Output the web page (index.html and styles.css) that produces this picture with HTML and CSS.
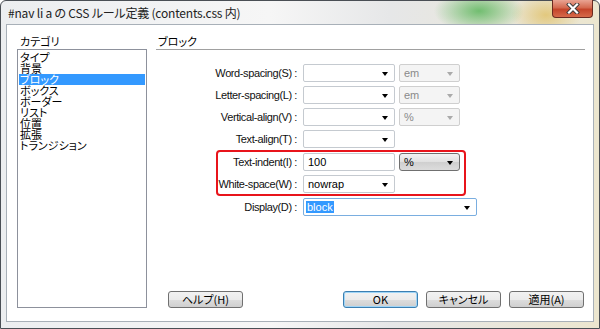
FILE: index.html
```html
<!DOCTYPE html>
<html lang="ja">
<head>
<meta charset="utf-8">
<title>CSS ルール定義</title>
<link rel="stylesheet" href="styles.css">
</head>
<body>
<div class="window">
  <div class="titlebar">
    <span class="title">#nav li a の CSS ルール定義 (contents.css 内)</span>
    <div class="close"><svg width="14" height="11" viewBox="0 0 14 11"><path d="M3 1.5 L11 9.5 M11 1.5 L3 9.5" stroke="#3a3a3a" stroke-width="4" stroke-linecap="square"/><path d="M3 1.5 L11 9.5 M11 1.5 L3 9.5" stroke="#fff" stroke-width="2.2" stroke-linecap="square"/></svg></div>
  </div>
  <div class="client">
    <div class="main">
      <div class="catcol">
        <div class="heading">カテゴリ</div>
        <ul class="listbox">
          <li>タイプ</li>
          <li>背景</li>
          <li class="sel">ブロック</li>
          <li>ボックス</li>
          <li>ボーダー</li>
          <li>リスト</li>
          <li>位置</li>
          <li>拡張</li>
          <li>トランジション</li>
        </ul>
      </div>
      <div class="panel">
        <div class="heading panelhead">ブロック</div>
        <div class="form">
          <div class="row"><label>Word-spacing(S) :</label><div class="sel-box w92"><span></span><i class="arr"></i></div><div class="sel-box dis w61"><span>em</span><i class="arr"></i></div></div>
          <div class="row"><label>Letter-spacing(L) :</label><div class="sel-box w92"><span></span><i class="arr"></i></div><div class="sel-box dis w61"><span>em</span><i class="arr"></i></div></div>
          <div class="row"><label>Vertical-align(V) :</label><div class="sel-box w92"><span></span><i class="arr"></i></div><div class="sel-box dis w61"><span>%</span><i class="arr"></i></div></div>
          <div class="row"><label>Text-align(T) :</label><div class="sel-box w92"><span></span><i class="arr"></i></div></div>
          <div class="highlight">
            <div class="row"><label>Text-indent(I) :</label><div class="input w92">100</div><div class="sel-box btn w61"><span>%</span><i class="arr"></i></div></div>
            <div class="row"><label>White-space(W) :</label><div class="sel-box w92"><span>nowrap</span><i class="arr"></i></div></div>
          </div>
          <div class="row"><label>Display(D) :</label><div class="sel-box focus w174"><span><em>block</em></span><i class="arr"></i></div></div>
        </div>
        <div class="buttons">
          <button class="help">ヘルプ(H)</button>
          <div class="right">
            <button class="default">OK</button>
            <button>キャンセル</button>
            <button>適用(A)</button>
          </div>
        </div>
      </div>
    </div>
  </div>
</div>
</body>
</html>
```

FILE: styles.css
```css
* { box-sizing: border-box; }
html, body { margin: 0; padding: 0; }
body {
  width: 600px; height: 329px; overflow: hidden;
  font-family: "Noto Sans CJK JP", sans-serif;
  font-feature-settings: "palt";
  font-size: 11px; color: #000;
  background: #fff;
}
.window {
  width: 600px; height: 329px;
  border: 1px solid #4a4f55;
  border-radius: 6px 6px 0 0;
  background:
    radial-gradient(ellipse 45px 22px at 478px 10px, rgba(100,185,100,0.9), rgba(120,195,120,0) 100%),
    radial-gradient(ellipse 35px 22px at 545px 14px, rgba(225,195,110,0.85), rgba(225,200,120,0) 100%),
    linear-gradient(to right, #eceef0, #f6f6f6 45%, #e6e7e8 65%, #ece6cf 100%);
  display: flex; flex-direction: column;
  position: relative;
}
.titlebar {
  height: 23px; flex: none;
  display: flex; align-items: center;
  padding-left: 7px;
}
.title { font-size: 12px; color: #222; letter-spacing: -0.2px; }
.close {
  position: absolute; top: -1px; right: 6px;
  width: 41px; height: 18px;
  border: 1px solid #6b2a20; border-top: none;
  border-radius: 0 0 4px 4px;
  background: linear-gradient(#e9a493, #d46a50 45%, #c4442a 55%, #d66a4a);
  display: flex; align-items: center; justify-content: center;
}
.client {
  flex: 1; margin: 0 5px 6px 5px;
  border: 1px solid #a8b0b8;
  background: #fff;
}
.main {
  display: grid; grid-template-columns: 130px 1fr;
  column-gap: 9px; padding: 8px 8px 13px 10px; height: 100%;
}
.catcol { display: flex; flex-direction: column; }
.heading { height: 16px; line-height: 16px; font-size: 11px; padding-left: 3px; }
.listbox {
  list-style: none; margin: 0; padding: 2px 1px 1px;
  flex: 1; border: 1px solid #8d919c;
  line-height: 11px; font-size: 11px;
}
.listbox li { height: 11px; padding-left: 1px; white-space: nowrap; }
.listbox li.sel { background: #3399ff; color: #fff; }
.panel { display: flex; flex-direction: column; }
.panelhead { border-bottom: 1px solid #a0a0a0; height: 17px; padding-left: 2px; }
.form { padding-top: 14px; display: flex; flex-direction: column; gap: 4px; }
.highlight {
  display: flex; flex-direction: column; gap: 4px;
  border: 2px solid #e8141b; border-radius: 4px;
  margin: -2px 0 -2px 60px; padding: 1px 4px 1px 0;
  align-self: flex-start;
}
.highlight .row label { width: 85px; }
.row { display: flex; align-items: center; height: 18px; }
.row label {
  width: 147px; text-align: right; padding-right: 6px; white-space: nowrap;
  font-family: "Liberation Sans", "Noto Sans CJK JP", sans-serif;
  letter-spacing: -0.4px; color: #111;
}
.sel-box, .input {
  height: 18px; border: 1px solid #c5cad0; border-radius: 2px;
  background: #fff; position: relative;
  display: flex; align-items: center; padding-left: 4px;
  font-family: "Liberation Sans", "Noto Sans CJK JP", sans-serif;
  font-size: 11px;
}
.w92 { width: 92px; }
.w61 { width: 61px; margin-left: 4px; }
.w174 { width: 174px; }
.arr {
  position: absolute; right: 6px; top: 7px;
  width: 0; height: 0;
  border-left: 3.5px solid transparent; border-right: 3.5px solid transparent;
  border-top: 4px solid #000;
}
.dis { background: #f4f4f4; border-color: #cfcfcf; color: #8a8a8a; }
.dis .arr { border-top-color: #aaa; }
.btn {
  background: linear-gradient(#f2f2f2, #e0e0e0 50%, #cfcfcf 51%, #dcdcdc);
  border-color: #707070; border-radius: 3px;
}
.focus { border-color: #7aaee0; padding-left: 2px; }
.focus em { font-style: normal; background: #3399ff; color: #fff; padding: 0 1px; }
.buttons {
  margin-top: auto; display: flex; align-items: center;
  padding-left: 12px; padding-right: 1px;
}
.right { margin-left: auto; display: flex; gap: 8px; }
button {
  font-family: "Noto Sans CJK JP", sans-serif; font-size: 11px;
  font-feature-settings: "palt";
  width: 75px; height: 17px; padding: 0; line-height: 15px;
  border: 1px solid #707070; border-radius: 3px;
  background: linear-gradient(#f2f2f2, #ebebeb 50%, #dddddd 51%, #cfcfcf);
  color: #000;
}
button.default { border-color: #3c7fb1; box-shadow: inset 0 0 0 1px #9fd5f7; }
```
